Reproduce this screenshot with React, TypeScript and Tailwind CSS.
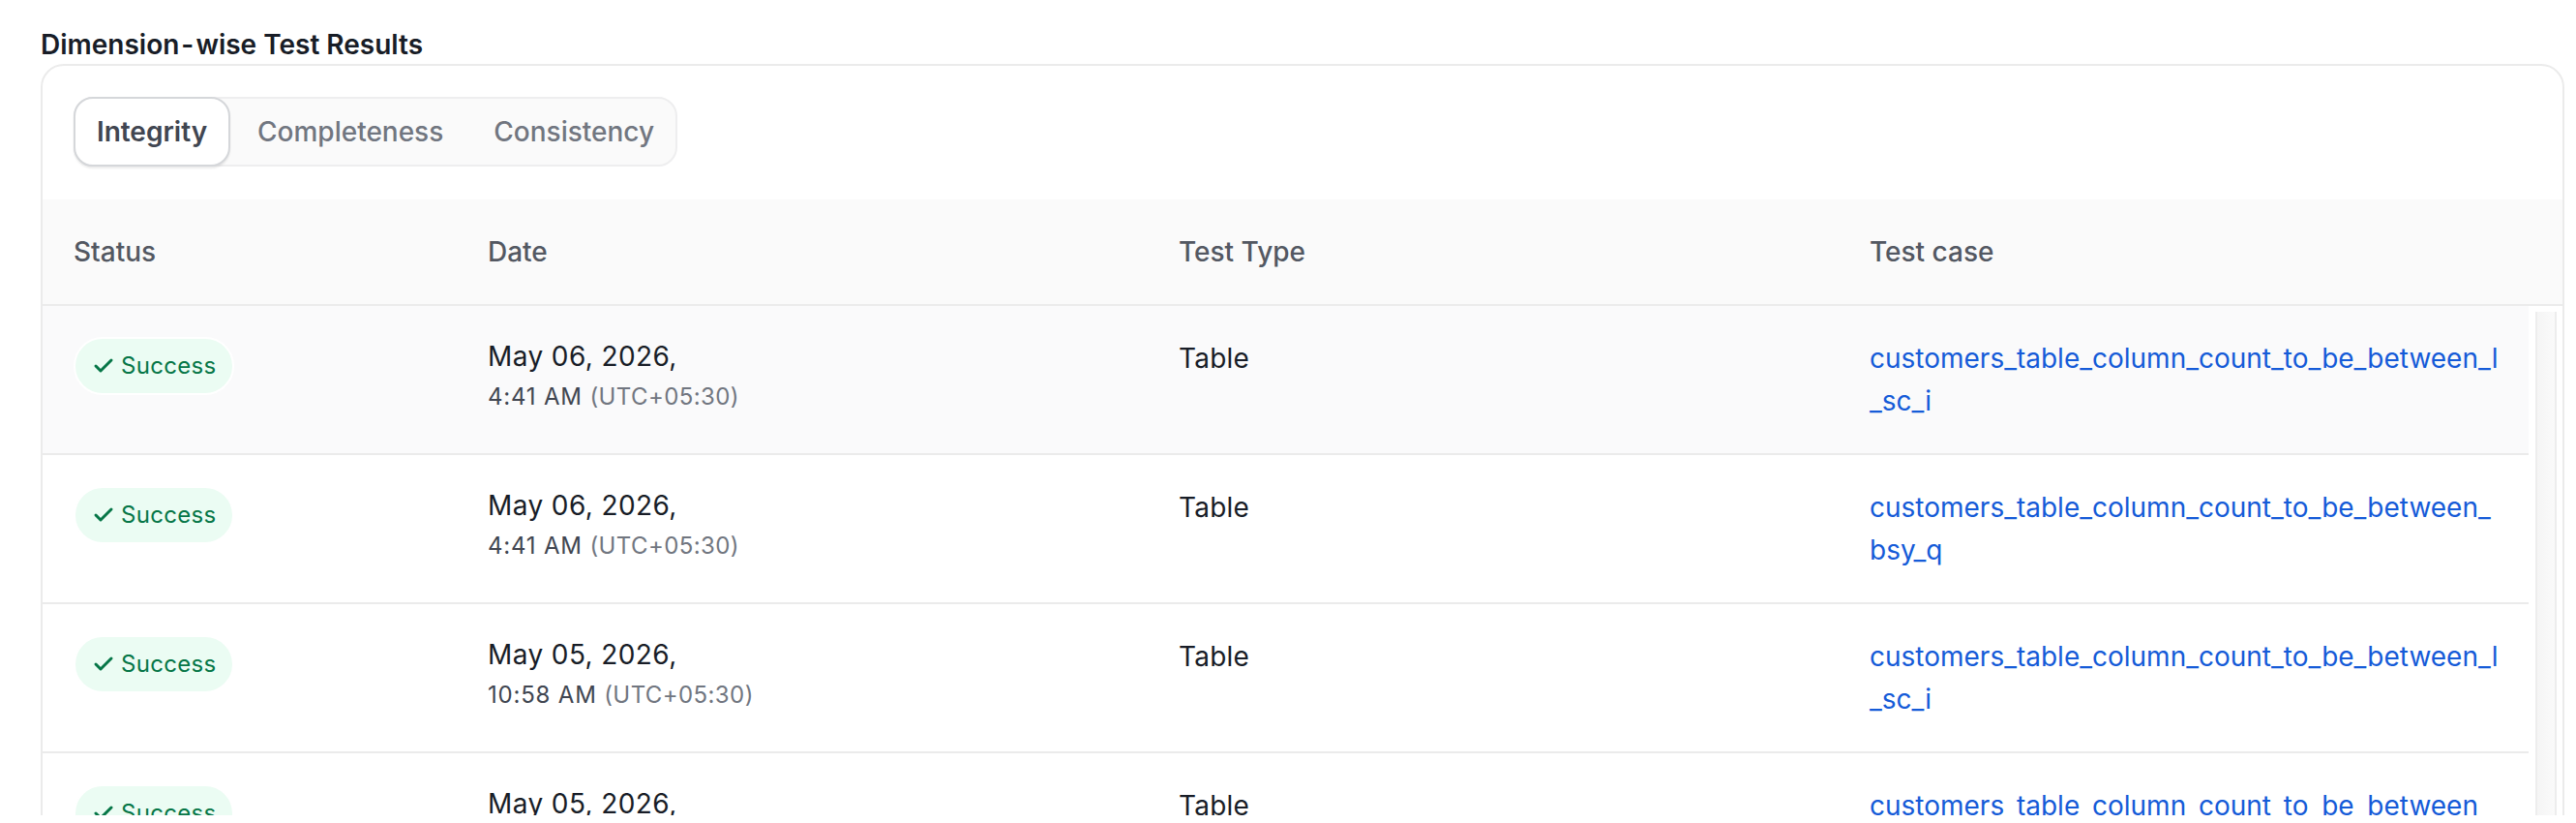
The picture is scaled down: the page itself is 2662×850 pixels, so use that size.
import { Check } from "lucide-react";

const ROWS = [
  { date: "May 06, 2026,", time: "4:41 AM", test: "customers_table_column_count_to_be_between_l_sc_i", hover: true },
  { date: "May 06, 2026,", time: "4:41 AM", test: "customers_table_column_count_to_be_between_bsy_q", hover: false },
  { date: "May 05, 2026,", time: "10:58 AM", test: "customers_table_column_count_to_be_between_l_sc_i", hover: false },
  { date: "May 05, 2026,", time: "10:58 AM", test: "customers_table_column_count_to_be_between_bsy_q", hover: false },
];

const COLS = "grid grid-cols-[428px_714px_714px_1fr]";

export default function App() {
  return (
    <div className="h-[842px] overflow-hidden bg-white pl-[42px] pr-[12px] pt-[28px] font-['Inter',sans-serif]">
      <h2 className="mb-[2px] text-[28px] leading-[36px] font-semibold text-[#181d27]">
        Dimension<span className="mx-[2px]">-</span>wise Test Results
      </h2>

      <div className="h-[900px] rounded-t-[24px] border-2 border-[#ebebeb] bg-white">
        {/* Tabs */}
        <div className="px-8 pt-8 pb-[34px]">
          <div className="inline-flex h-[72px] rounded-[20px] border-2 border-[#eeeeef] bg-[#fafafa]">
            <button className="-m-[2px] h-[72px] w-[162px] rounded-[20px] border-2 border-[#d5d7da] bg-white text-[28px] font-semibold text-[#414651] shadow-[0_2px_2px_rgba(10,13,18,0.08)]">Integrity</button>
            <span className="flex items-center pl-[30px] pr-[52px] text-[28px] font-medium text-[#717680]">Completeness</span>
            <span className="flex items-center pr-[22px] text-[28px] font-medium text-[#717680]">Consistency</span>
          </div>
        </div>

        {/* Table header */}
        <div className={`${COLS} h-[110px] items-center border-b-2 border-[#ebebeb] bg-[#fafafa] text-[28px] font-medium text-[#535862]`}>
          <span className="pl-8">Status</span>
          <span className="pl-8">Date</span>
          <span className="pl-8">Test Type</span>
          <span className="pl-8">Test case</span>
        </div>

        <div className="flex">
          <div className="w-[2569px] shrink-0">
            {ROWS.map((r, i) => (
              <div key={i} className={`${COLS} h-[154px] border-b-2 border-[#ebebeb] pt-8 ${r.hover ? "bg-[#fafafb]" : "bg-white"}`}>
                <div className="pl-8">
                  <span className="inline-flex h-[60px] w-[166px] items-center gap-[6px] rounded-full border-2 border-white bg-[#ebfcf3] pl-[17px] text-[24px] tracking-[0.3px] text-[#067647]">
                    <Check size={24} strokeWidth={3} />
                    Success
                  </span>
                </div>
                <div className="pl-8">
                  <p className="text-[28px] leading-[40px] tracking-[0.4px] text-[#181d27]">{r.date}</p>
                  <p className="text-[24px] leading-[44px] tracking-[0.8px] text-[#414651]">
                    {r.time} <span className="tracking-[0.4px] text-[#717680]">(UTC+05:30)</span>
                  </p>
                </div>
                <div className="pl-8 text-[28px] leading-[44px] tracking-[0.2px] text-[#181d27]">Table</div>
                <div className="pl-8 pr-6 text-[28px] leading-[44px] break-all text-[#155bd8]">{r.test}</div>
              </div>
            ))}
          </div>
          {/* Scrollbar */}
          <div className="ml-[7px] mt-[6px] h-[800px] w-[22px] border-x-2 border-[#ededed] bg-gradient-to-r from-[#f5f5f5] to-[#fafafa]" />
        </div>
      </div>
    </div>
  );
}
